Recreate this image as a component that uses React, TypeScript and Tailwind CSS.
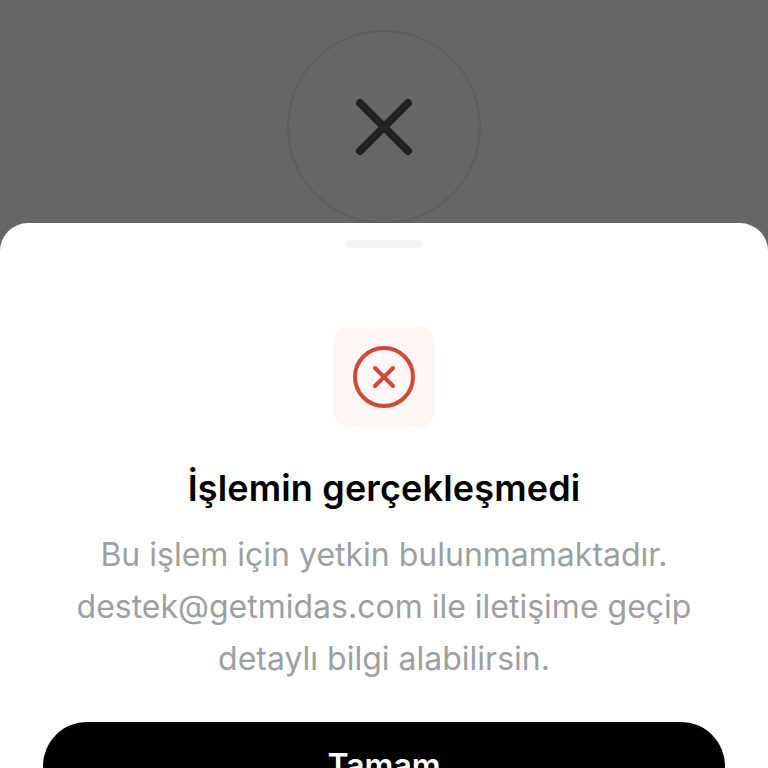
export default function App() {
    return (
        <div className="h-screen overflow-hidden flex flex-col bg-[#666666] font-['Inter',sans-serif]">
            <div className="h-[223px] shrink-0 pt-[30px] flex justify-center">
                <div className="w-[194px] h-[194px] rounded-full border-2 border-[#5e5e5e] flex items-center justify-center">
                    <svg width="58" height="58" viewBox="0 0 58 58" fill="none" stroke="#222222" strokeWidth="8" strokeLinecap="round">
                        <path d="M5 5L53 53" />
                        <path d="M53 5L5 53" />
                    </svg>
                </div>
            </div>

            <div className="flex-1 bg-white rounded-t-[28px] flex flex-col items-center pt-[17px] px-[43px]">
                <div className="w-[76px] h-2 rounded-full bg-[#f3f4f6]" />

                <div className="w-[102px] h-[102px] mt-[78px] rounded-[18px] bg-[#fef7f4] flex items-center justify-center">
                    <div className="w-[62px] h-[62px] rounded-full border-4 border-[#d0493a] flex items-center justify-center">
                        <svg width="24" height="24" viewBox="0 0 24 24" fill="none" stroke="#d0493a" strokeWidth="4" strokeLinecap="round">
                            <path d="M3 3L21 21" />
                            <path d="M21 3L3 21" />
                        </svg>
                    </div>
                </div>

                <h1 className="mt-[38px] text-[36px] leading-[44px] font-semibold tracking-[0.15px] text-black whitespace-nowrap">
                    İşlemin gerçekleşmedi
                </h1>
                <p className="mt-[19px] text-[32px] leading-[52px] text-[#9d9fa3] text-center whitespace-nowrap">
                    Bu işlem için yetkin bulunmamaktadır.
                    <br />
                    destek@getmidas.com ile iletişime geçip
                    <br />
                    detaylı bilgi alabilirsin.
                </p>

                <button className="mt-[37px] w-full h-[88px] shrink-0 rounded-[44px] bg-black text-white text-[32px] font-semibold">
                    Tamam
                </button>
            </div>
        </div>
    );
}
